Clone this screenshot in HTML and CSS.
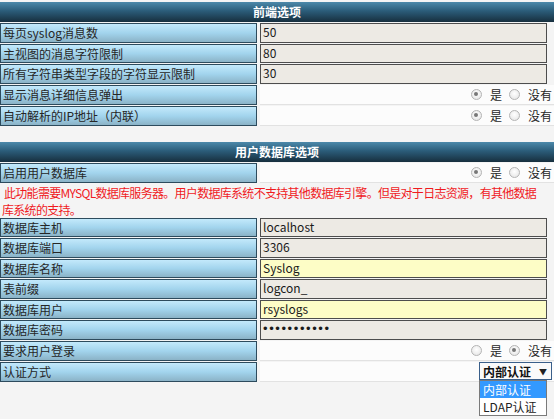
FILE: index.html
```html
<!DOCTYPE html>
<html lang="zh">
<head>
<meta charset="utf-8">
<title>Options</title>
<link rel="stylesheet" href="styles.css">
</head>
<body>
<div class="page">
  <section class="group">
    <div class="head">前端选项</div>
    <div class="row"><div class="label">每页syslog消息数</div><div class="val"><div class="input">50</div></div></div>
    <div class="row"><div class="label">主视图的消息字符限制</div><div class="val"><div class="input">80</div></div></div>
    <div class="row"><div class="label">所有字符串类型字段的字符显示限制</div><div class="val"><div class="input">30</div></div></div>
    <div class="row tall"><div class="label">显示消息详细信息弹出</div><div class="val choice"><span class="radio on"></span><span class="opt">是</span><span class="radio"></span><span class="opt">没有</span></div></div>
    <div class="row tall"><div class="label">自动解析的IP地址（内联）</div><div class="val choice"><span class="radio on"></span><span class="opt">是</span><span class="radio"></span><span class="opt">没有</span></div></div>
  </section>

  <section class="group second">
    <div class="head">用户数据库选项</div>
    <div class="row tall"><div class="label">启用用户数据库</div><div class="val choice"><span class="radio on"></span><span class="opt">是</span><span class="radio"></span><span class="opt">没有</span></div></div>
    <p class="warn">&nbsp;此功能需要MYSQL数据库服务器。用户数据库系统不支持其他数据库引擎。但是对于日志资源，有其他数据<br>库系统的支持。</p>
    <div class="row"><div class="label">数据库主机</div><div class="val"><div class="input">localhost</div></div></div>
    <div class="row"><div class="label">数据库端口</div><div class="val"><div class="input">3306</div></div></div>
    <div class="row"><div class="label">数据库名称</div><div class="val"><div class="input yellow">Syslog</div></div></div>
    <div class="row"><div class="label">表前缀</div><div class="val"><div class="input">logcon_</div></div></div>
    <div class="row"><div class="label">数据库用户</div><div class="val"><div class="input yellow">rsyslogs</div></div></div>
    <div class="row"><div class="label">数据库密码</div><div class="val"><div class="input dots">•••••••••••</div></div></div>
    <div class="row tall"><div class="label">要求用户登录</div><div class="val choice"><span class="radio"></span><span class="opt">是</span><span class="radio on"></span><span class="opt">没有</span></div></div>
    <div class="row tall"><div class="label">认证方式</div><div class="val choice sel-cell">
      <div class="select"><span>内部认证</span><span class="arrow">▼</span></div>
    </div></div>
  </section>
  <ul class="dropdown"><li class="hl">内部认证</li><li>LDAP认证</li></ul>
</div>
</body>
</html>
```
FILE: styles.css
```css
html, body {
  margin: 0;
  background: #f4f4f4;
}
body {
  font: 12px "Noto Sans CJK SC", "Liberation Sans", sans-serif;
  color: #333;
}
.page {
  position: relative;
  padding-top: 2px;
  min-height: 417px;
}
.group.second {
  margin-top: 16px;
}
.head {
  height: 20px;
  line-height: 20px;
  text-align: center;
  color: #fff;
  font-weight: bold;
  background: linear-gradient(#4c89aa, #2b5c79 45%, #172f3e);
}
.row {
  display: flex;
  gap: 3px;
  margin-top: 1px;
  height: 19.5px;
}
.row.tall {
  height: 20px;
}
.label {
  width: 257px;
  box-sizing: border-box;
  border: 1px solid #2d4b5d;
  background: linear-gradient(#c3e9fb, #a2d4ed 50%, #8bb3c7);
  padding-left: 2px;
  line-height: 17px;
  color: #262626;
  white-space: nowrap;
}
.val {
  flex: 1;
  min-width: 0;
}
.input {
  margin-right: 7px;
  height: 100%;
  box-sizing: border-box;
  border: 1px solid #4d4d4d;
  background: #edeae4;
  padding-left: 2px;
  line-height: 16px;
  color: #1a1a1a;
}
.input.yellow {
  background: #fdfdc6;
}
.input.dots {
  font-family: "Liberation Sans", sans-serif;
  font-size: 13px;
  letter-spacing: 1.6px;
}
.choice {
  background: #fcfcfc;
  border-bottom: 1px solid #e2e2e2;
  display: flex;
  justify-content: flex-end;
  align-items: center;
  padding-right: 2px;
  box-sizing: border-box;
}
.radio {
  width: 11px;
  height: 11px;
  box-sizing: border-box;
  border-radius: 50%;
  border: 1px solid #b4b4b4;
  background: radial-gradient(circle at 50% 40%, #ffffff, #e2e2e2);
  margin-right: 8px;
  position: relative;
}
.radio.on::after {
  content: "";
  position: absolute;
  left: 2.5px;
  top: 2.5px;
  width: 4px;
  height: 4px;
  border-radius: 50%;
  background: #777;
}
.opt {
  margin-right: 7px;
  color: #262626;
}
.opt:last-child {
  margin-right: 0;
}
.warn {
  margin: 0;
  padding: 1px 0 0 2px;
  color: #f01a1e;
  line-height: 17px;
  height: 33px;
  letter-spacing: -0.7px;
  white-space: nowrap;
}
.select {
  width: 73px;
  height: 18px;
  box-sizing: border-box;
  border: 1px solid #3a5f8a;
  background: #fafafa;
  display: flex;
  align-items: center;
  justify-content: space-between;
  padding: 0 4px 0 3px;
  font-weight: bold;
  color: #111;
  font-size: 12px;
}
.arrow {
  font-size: 8px;
  font-weight: normal;
  color: #222;
}
.dropdown {
  position: absolute;
  top: 380px;
  left: 479px;
  width: 66px;
  margin: 0;
  padding: 0;
  list-style: none;
  border: 1px solid #7a7a7a;
  background: #fff;
  z-index: 2;
}
.dropdown li {
  height: 17px;
  line-height: 17px;
  padding-left: 3px;
  color: #222;
}
.dropdown li.hl {
  background: #3399ff;
  color: #fff;
}
```
